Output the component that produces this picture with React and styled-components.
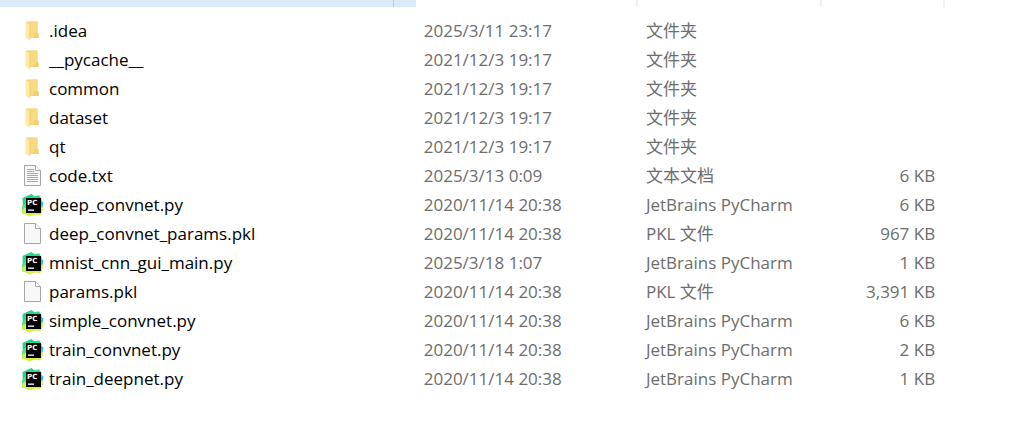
import React from 'react';
import styled, { createGlobalStyle } from 'styled-components';

const GlobalStyle = createGlobalStyle`
  body {
    margin: 0;
    background: #ffffff;
    font-family: 'Open Sans', 'Noto Sans CJK SC', sans-serif;
    font-size: 17px;
    color: #6d6d6d;
  }
`;

const FileTable = styled.table`
  width: 100%;
  table-layout: fixed;
  border-collapse: separate;
  border-spacing: 0;
`;

const Column = styled.col`
  width: ${(props) => props.$width};
`;

const HeaderCell = styled.th`
  height: 7px;
  padding: 0;
  background: ${(props) => (props.$active ? '#d9ebf9' : '#ffffff')};
  border-right: ${(props) => (props.$divider ? '2px solid #f0f0f0' : 'none')};
`;

const SortMenuButton = styled.button`
  display: block;
  width: 23px;
  height: 7px;
  margin-left: auto;
  padding: 0;
  border: none;
  border-left: 1px solid #b5d3e8;
  background: transparent;
`;

const FileList = styled.tbody`
  &::before {
    content: '';
    display: block;
    height: 9px;
  }
`;

const Row = styled.tr`
  height: 29px;
`;

const Cell = styled.td`
  height: 29px;
  padding: 0 10px 0 8px;
  line-height: 24px;
  text-align: ${(props) => props.$align || 'left'};
  white-space: nowrap;
`;

const NameCell = styled(Cell)`
  padding-left: 21px;
  color: #000000;
`;

const FileName = styled.div`
  display: flex;
  align-items: center;
  gap: 5px;
`;

const Icon = styled.svg`
  flex: none;
  width: 23px;
  height: 24px;
`;

function FolderIcon() {
  return (
    <Icon viewBox="0 0 23 24" aria-hidden="true">
      <path d="M5 2.5h11.5v11.5l1 1V19H5z" fill="#f5d477" />
      <path d="M9 2.5h7.5v11.5l1 1V19H9z" fill="#f8da83" />
      <path d="M14 14h2.5l1 1V19H12z" fill="#f3cf6f" />
      <path d="M4.5 2.5 8.7 5.4v16.1L4.5 18.8z" fill="#ffe9a6" />
      <path d="M8.7 5.4v16.1l.7-2.5V6.5z" fill="#edc663" />
    </Icon>
  );
}

function PageIcon({ lines }) {
  return (
    <Icon viewBox="0 0 23 24" aria-hidden="true">
      <path d="M3.5 1.5h11l5 5v15h-16z" fill="#f8f8f8" stroke="#a6a6a6" />
      <path d="M14.5 1.5v5h5" fill="#ffffff" stroke="#a6a6a6" />
      {lines && (
        <path
          d="M6 5.5h7M6 7.5h7M6 9.5h11M6 11.5h11M6 13.5h11M6 15.5h11M6 17.5h11"
          stroke="#a8a8a8"
        />
      )}
    </Icon>
  );
}

function PyCharmIcon() {
  return (
    <Icon viewBox="0 0 23 24" aria-hidden="true">
      <path d="M1.5 5 8 2l2.5-1 3 2.2L13 21l-5 1-6-2z" fill="#21d789" />
      <path d="M12.5 3.5 18 2.2l2.5 4V12h-8z" fill="#27dc86" />
      <path d="m18.5 7 4 2.5-1.4 6-3.1 2z" fill="#12c9ee" />
      <path d="M1 13.5 5.5 9v10L1.5 21z" fill="#55e476" />
      <path d="m1 20.5 1-4.5 4-1.5 13 1 2.5-3 .3 5.5-2.8 4.2-5-.7-5.5 2L3.5 21z" fill="#d5ef45" />
      <rect x="5" y="5" width="15" height="15" fill="#000000" />
      <text x="6" y="12" fill="#ffffff" fontFamily="DejaVu Sans, sans-serif" fontSize="7" fontWeight="700">
        PC
      </text>
      <rect x="7" y="16.5" width="6" height="1.3" fill="#ffffff" />
    </Icon>
  );
}

function FileIcon({ kind }) {
  if (kind === 'folder') return <FolderIcon />;
  if (kind === 'python') return <PyCharmIcon />;
  return <PageIcon lines={kind === 'text'} />;
}

const files = [
  { name: '.idea', date: '2025/3/11 23:17', type: '文件夹', kind: 'folder' },
  { name: '__pycache__', date: '2021/12/3 19:17', type: '文件夹', kind: 'folder' },
  { name: 'common', date: '2021/12/3 19:17', type: '文件夹', kind: 'folder' },
  { name: 'dataset', date: '2021/12/3 19:17', type: '文件夹', kind: 'folder' },
  { name: 'qt', date: '2021/12/3 19:17', type: '文件夹', kind: 'folder' },
  { name: 'code.txt', date: '2025/3/13 0:09', type: '文本文档', size: '6 KB', kind: 'text' },
  { name: 'deep_convnet.py', date: '2020/11/14 20:38', type: 'JetBrains PyCharm', size: '6 KB', kind: 'python' },
  { name: 'deep_convnet_params.pkl', date: '2020/11/14 20:38', type: 'PKL 文件', size: '967 KB', kind: 'blank' },
  { name: 'mnist_cnn_gui_main.py', date: '2025/3/18 1:07', type: 'JetBrains PyCharm', size: '1 KB', kind: 'python' },
  { name: 'params.pkl', date: '2020/11/14 20:38', type: 'PKL 文件', size: '3,391 KB', kind: 'blank' },
  { name: 'simple_convnet.py', date: '2020/11/14 20:38', type: 'JetBrains PyCharm', size: '6 KB', kind: 'python' },
  { name: 'train_convnet.py', date: '2020/11/14 20:38', type: 'JetBrains PyCharm', size: '2 KB', kind: 'python' },
  { name: 'train_deepnet.py', date: '2020/11/14 20:38', type: 'JetBrains PyCharm', size: '1 KB', kind: 'python' },
];

export default function App() {
  return (
    <>
      <GlobalStyle />
      <FileTable>
        <colgroup>
          <Column $width="40.6%" />
          <Column $width="21.7%" />
          <Column $width="18%" />
          <Column $width="12%" />
          <Column />
        </colgroup>
        <thead>
          <tr>
            <HeaderCell $active aria-label="名称">
              <SortMenuButton type="button" aria-label="名称筛选" />
            </HeaderCell>
            <HeaderCell $divider aria-label="修改日期" />
            <HeaderCell $divider aria-label="类型" />
            <HeaderCell $divider aria-label="大小" />
            <HeaderCell as="td" />
          </tr>
        </thead>
        <FileList>
          {files.map((file) => (
            <Row key={file.name}>
              <NameCell>
                <FileName>
                  <FileIcon kind={file.kind} />
                  {file.name}
                </FileName>
              </NameCell>
              <Cell>{file.date}</Cell>
              <Cell>{file.type}</Cell>
              <Cell $align="right">{file.size}</Cell>
              <Cell />
            </Row>
          ))}
        </FileList>
      </FileTable>
    </>
  );
}
